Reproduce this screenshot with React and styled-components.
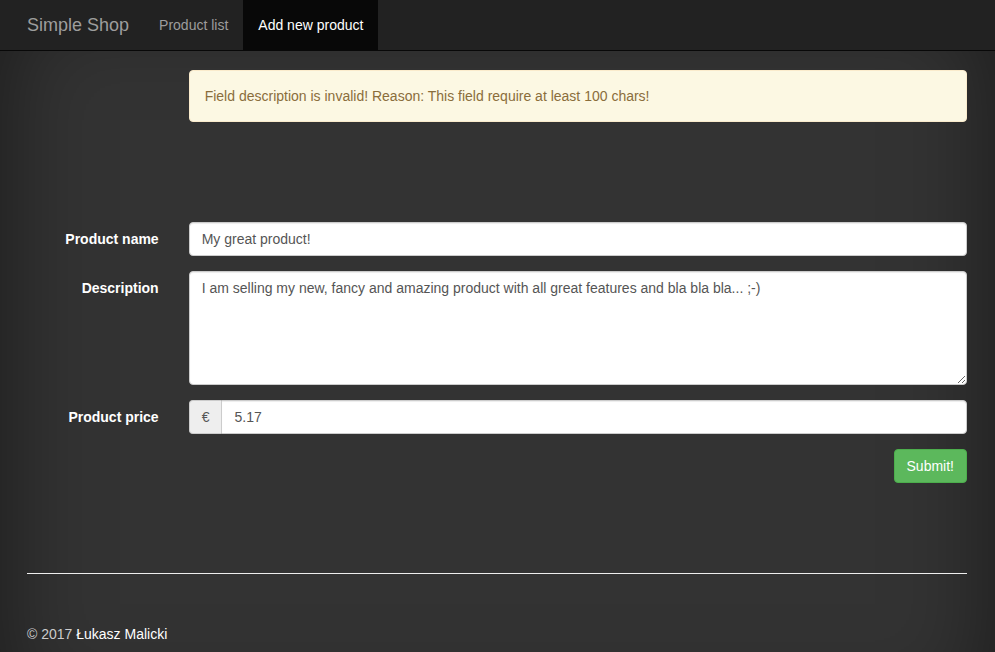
import React from 'react';
import styled, { createGlobalStyle } from 'styled-components';

const GlobalStyle = createGlobalStyle`
  * { box-sizing: border-box; }
  html, body { margin: 0; padding: 0; }
  body {
    font-family: "Liberation Sans", Arial, sans-serif;
    font-size: 14px;
    line-height: 1.42857;
    color: #fff;
    background-color: #333;
  }
`;

const Page = styled.div`
  min-height: 100vh;
  padding-bottom: 80px;
  background-color: #333;
  box-shadow: inset 0 0 100px rgba(0, 0, 0, 0.5);
`;

const Navbar = styled.nav`
  height: 51px;
  background-color: #222;
  border-bottom: 1px solid #080808;
  margin-bottom: 19px;
`;

const Container = styled.div`
  width: 970px;
  margin: 0 13px 0 12px;
  padding: 0 15px;
`;

const NavInner = styled(Container)`
  display: flex;
  height: 50px;
`;

const Brand = styled.a`
  margin-left: -15px;
  padding: 15px;
  height: 50px;
  font-size: 18px;
  line-height: 20px;
  color: #9d9d9d;
  text-decoration: none;
`;

const NavLink = styled.a`
  padding: 15px;
  line-height: 20px;
  color: ${(p) => (p.$active ? '#fff' : '#9d9d9d')};
  background-color: ${(p) => (p.$active ? '#080808' : 'transparent')};
  text-decoration: none;
`;

const Row = styled.div`
  display: grid;
  grid-template-columns: 161.67px 1fr;
  margin: 0 -15px ${(p) => p.$mb ?? 15}px;
  > * { padding: 0 15px; }
`;

const Alert = styled.div`
  padding: 15px;
  border: 1px solid #faebcc;
  border-radius: 4px;
  background-color: #fcf8e3;
  color: #8a6d3b;
  line-height: 20px;
`;

const Label = styled.label`
  padding-top: 7px;
  text-align: right;
  font-weight: bold;
  line-height: 20px;
  color: #fff;
`;

const fieldBase = `
  display: block;
  width: 100%;
  padding: 6px 12px;
  font-family: "Liberation Sans", Arial, sans-serif;
  font-size: 14px;
  line-height: 20px;
  color: #555;
  background-color: #fff;
  border: 1px solid #ccc;
  box-shadow: inset 0 1px 1px rgba(0, 0, 0, 0.075);
`;

const Input = styled.input`
  ${fieldBase}
  height: 34px;
  border-radius: ${(p) => (p.$joined ? '0 4px 4px 0' : '4px')};
  outline: none;
`;

const TextArea = styled.textarea`
  ${fieldBase}
  height: 114px;
  border-radius: 4px;
  resize: vertical;
  outline: none;
`;

const InputGroup = styled.div`
  display: flex;
`;

const Addon = styled.span`
  padding: 6px 12px;
  line-height: 20px;
  color: #555;
  background-color: #eee;
  border: 1px solid #ccc;
  border-right: 0;
  border-radius: 4px 0 0 4px;
`;

const Actions = styled.div`
  display: flex;
  justify-content: flex-end;
`;

const Button = styled.button`
  padding: 6px 12px;
  font-family: "Liberation Sans", Arial, sans-serif;
  font-size: 14px;
  line-height: 20px;
  color: #fff;
  background-color: #5cb85c;
  border: 1px solid #4cae4c;
  border-radius: 4px;
`;

const Rule = styled.hr`
  margin: 90px 0 0;
  border: 0;
  border-top: 1px solid #eee;
`;

const Footer = styled.footer`
  padding: 50px 0 0;
  line-height: 20px;
  color: #ccc;
  a { color: #fff; text-decoration: none; }
`;

export default function App() {
  return (
    <>
      <GlobalStyle />
      <Page>
        <Navbar>
          <NavInner>
            <Brand href="#">Simple Shop</Brand>
            <NavLink href="#">Product list</NavLink>
            <NavLink href="#" $active>Add new product</NavLink>
          </NavInner>
        </Navbar>
        <Container>
          <Row $mb={100}>
            <div />
            <div>
              <Alert>Field description is invalid! Reason: This field require at least 100 chars!</Alert>
            </div>
          </Row>
          <Row>
            <Label>Product name</Label>
            <div>
              <Input defaultValue="My great product!" />
            </div>
          </Row>
          <Row>
            <Label>Description</Label>
            <div>
              <TextArea defaultValue="I am selling my new, fancy and amazing product with all great features and bla bla bla... ;-)" />
            </div>
          </Row>
          <Row>
            <Label>Product price</Label>
            <div>
              <InputGroup>
                <Addon>€</Addon>
                <Input $joined defaultValue="5.17" />
              </InputGroup>
            </div>
          </Row>
          <Row $mb={0}>
            <div />
            <Actions>
              <Button>Submit!</Button>
            </Actions>
          </Row>
          <Rule />
          <Footer>
            © 2017 <a href="#">Łukasz Malicki</a>
          </Footer>
        </Container>
      </Page>
    </>
  );
}
